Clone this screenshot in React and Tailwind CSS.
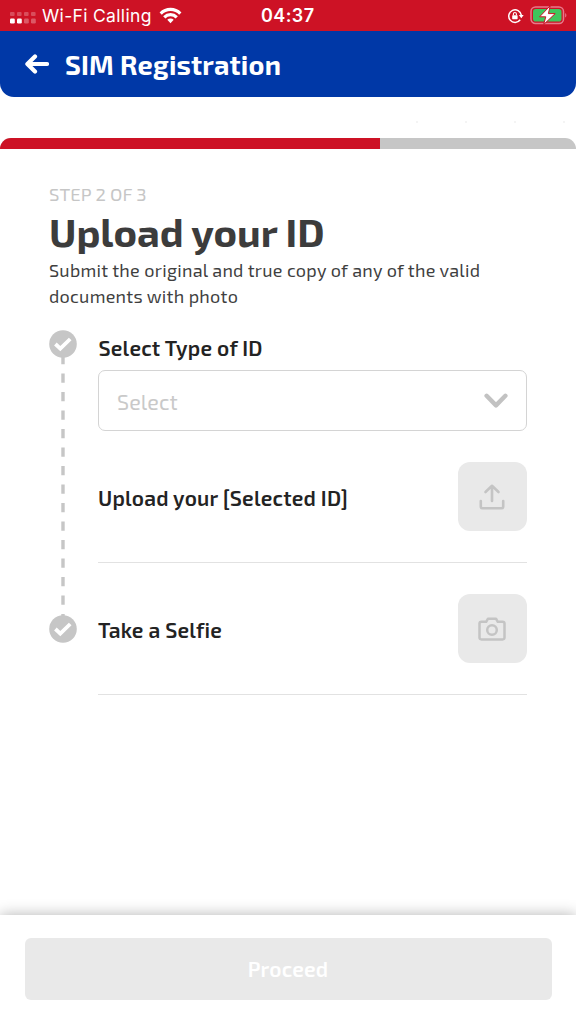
import React from "react";

const SANS = "font-['Exo_2','Noto_Sans',sans-serif]";

function StatusBar() {
  return (
    <div className="flex h-[30.5px] items-center bg-[#cd1225] pl-[9.5px] pr-[8px] pt-[1px] font-['Inter',sans-serif] text-white">
      <div className="flex w-[251.5px] items-center">
        <svg width="26" height="12" viewBox="0 0 26 12" className="mt-[5px]" fill="#fff">
          {[0, 7, 14, 21].map((x, i) => (
            <g key={x}>
              <rect x={x} y="0" width="4.6" height="4" rx="1" opacity="0.25" />
              <rect x={x} y="6.5" width="4.8" height="5" rx="1.2" opacity={i < 2 ? 1 : 0.3} />
            </g>
          ))}
        </svg>
        <span className="ml-[6.5px] whitespace-nowrap text-[17.5px] leading-[28px] tracking-[0.33px]">Wi-Fi Calling</span>
        <svg width="23" height="17" viewBox="0 0 24 18" className="ml-[7.5px] mt-[-1px]" fill="none" stroke="#fff" strokeWidth="3.4">
          <path d="M1.6 6.9a14.7 14.7 0 0 1 20.8 0" />
          <path d="M5.4 10.9a9.3 9.3 0 0 1 13.2 0" />
          <path d="M12 17.2l-3.4-3.6a4.9 4.9 0 0 1 6.8 0z" fill="#fff" stroke="none" />
        </svg>
      </div>
      <span className="whitespace-nowrap text-[18px] font-semibold leading-[28px] tracking-[0.4px]">04:37</span>
      <svg width="18" height="16" viewBox="0 0 18 16" className="ml-auto" fill="none" stroke="#fff" strokeWidth="1.5">
        <path d="M13.2 11.8A6.3 6.3 0 1 1 14.3 7.2" />
        <path d="M11.9 7h4.8l-2.4 3.2z" fill="#fff" stroke="none" />
        <rect x="5.2" y="7.2" width="5.4" height="4" rx=".6" fill="#fff" stroke="none" />
        <path d="M6.4 7.3V6a1.5 1.5 0 0 1 3 0v1.3" strokeWidth="1.1" />
      </svg>
      <svg width="38" height="20" viewBox="0 0 38 20" className="ml-[5px] mt-[-2px]">
        <rect x="1" y="2" width="32.5" height="16.5" rx="4.5" fill="none" stroke="#e8798a" strokeWidth="1.5" />
        <rect x="3" y="4" width="28.5" height="12.5" rx="2.8" fill="#3fc65c" />
        <path d="M35.2 8v4.6c1.6-.7 1.6-3.9 0-4.6z" fill="#e8798a" />
        <path d="M20.2 .8L9.6 11.8h6.2L13.6 19.6 25.2 8.6h-6.8z" fill="#fff" stroke="#cd1225" strokeWidth="1" strokeLinejoin="round" />
      </svg>
    </div>
  );
}

function CheckBadge() {
  return (
    <svg width="28" height="28" viewBox="0 0 28 28" className="block shrink-0">
      <circle cx="14" cy="14" r="13.8" fill="#c6c6c6" />
      <path d="M6.4 14l4.9 4.6 9.9-9.6" fill="none" stroke="#fff" strokeWidth="3.8" />
    </svg>
  );
}

function Timeline() {
  return (
    <div className="flex w-[28px] shrink-0 flex-col items-center">
      <CheckBadge />
      <svg width="4" height="257" viewBox="0 0 4 257" className="block overflow-visible">
        <path d="M2 -3V258" stroke="#c6c6c6" strokeWidth="3.4" strokeDasharray="9.3 9.2" />
      </svg>
      <CheckBadge />
    </div>
  );
}

function ActionRow({ label, children }) {
  return (
    <div className="flex h-[101px] items-start justify-between border-b-[1.5px] border-[#e2e2e2]">
      <span className="mt-[21px] whitespace-nowrap text-[21px] font-semibold leading-[30px] tracking-[0.2px] text-[#232323]">{label}</span>
      <button className="flex size-[69px] items-center justify-center rounded-[12px] bg-[#e9e9e9]">{children}</button>
    </div>
  );
}

export default function App() {
  return (
    <div className={`flex h-[1024px] w-[576px] flex-col overflow-hidden bg-white ${SANS}`}>
      <StatusBar />
      <header className="flex h-[66px] items-center rounded-b-[14px] bg-[#0038a7] pl-[25px] text-white">
        <svg width="24" height="20" viewBox="0 0 24 20" fill="none" stroke="#fff" strokeWidth="4.2" strokeLinecap="round" strokeLinejoin="round">
          <path d="M22 10H3.5M10 2.4L2.4 10l7.6 7.6" />
        </svg>
        <h1 className="ml-[16px] whitespace-nowrap text-[27px] font-bold leading-[36px] tracking-[0.2px]">SIM Registration</h1>
      </header>

      <div className="mt-[24px] flex h-[2px] justify-end gap-[47px] pr-[11px]">
        <i className="size-[2px] rounded-full bg-[#f0f0f0]" />
        <i className="size-[2px] rounded-full bg-[#f0f0f0]" />
        <i className="size-[2px] rounded-full bg-[#f0f0f0]" />
        <i className="size-[2px] rounded-full bg-[#f0f0f0]" />
      </div>
      <div className="mt-[15.5px] h-[11px] overflow-hidden rounded-t-[11px] bg-[#c6c6c6]">
        <div className="h-full w-[380px] bg-[#cd1225]" />
      </div>

      <main className="flex grow flex-col px-[49px] pt-[33px]">
        <p className="h-[23px] whitespace-nowrap text-[18.5px] leading-[24px] tracking-[0.05px] text-[#c6c6c6]">STEP 2 OF 3</p>
        <h2 className="h-[52px] whitespace-nowrap text-[40px] font-bold leading-[52px] tracking-[-0.05px] text-[#3c3c3c]">Upload your ID</h2>
        <p className="h-[52px] whitespace-nowrap text-[18px] leading-[26px] tracking-[0.26px] text-[#3f3f3f]">
          Submit the original and true copy of any of the valid
          <br />
          documents with photo
        </p>

        <section className="mt-[21px] flex">
          <Timeline />
          <div className="ml-[21px] flex w-[429px] flex-col">
            <label className="mt-[3px] h-[30px] whitespace-nowrap pl-[0.5px] text-[21px] font-semibold leading-[30px] tracking-[0.2px] text-[#232323]">Select Type of ID</label>
            <div className="mt-[7px] flex h-[61px] items-center justify-between rounded-[7px] border-[1.5px] border-[#d4d4d4] pl-[18px] pr-[18px]">
              <span className="mt-[2px] text-[21.5px] leading-[28px] tracking-[0.1px] text-[#c9c9c9]">Select</span>
              <svg width="24" height="16" viewBox="0 0 24 16" fill="none" stroke="#c2c2c2" strokeWidth="4.4" strokeLinecap="round" strokeLinejoin="round">
                <path d="M2.6 2.8L12 12.4l9.4-9.6" />
              </svg>
            </div>
            <div className="mt-[31px] flex flex-col gap-[31px]">
              <ActionRow label="Upload your [Selected ID]">
                <svg width="26" height="26" viewBox="0 0 26 26" className="mr-px" fill="none" stroke="#c4c4c4" strokeWidth="2.6" strokeLinecap="round" strokeLinejoin="round">
                  <path d="M13 17V2.5M6.5 8L13 1.8 19.5 8M1.8 17v5.6c0 1 .7 1.6 1.6 1.6h19.2c1 0 1.6-.7 1.6-1.6V17" />
                </svg>
              </ActionRow>
              <ActionRow label="Take a Selfie">
                <svg width="28" height="24" viewBox="0 0 28 24" className="mr-px" fill="none" stroke="#c4c4c4" strokeWidth="2.5" strokeLinejoin="round">
                  <path d="M3.4 4.8h4.8L10 1.7h8l1.8 3.1h4.8c1.1 0 1.9.8 1.9 1.8v14c0 1-.8 1.8-1.9 1.8H3.4c-1.1 0-1.9-.8-1.9-1.8v-14c0-1 .8-1.8 1.9-1.8z" />
                  <circle cx="14" cy="13" r="4.8" />
                </svg>
              </ActionRow>
            </div>
          </div>
        </section>
      </main>

      <footer className="h-[109.5px] shrink-0 bg-white px-[24.5px] pt-[23px] shadow-[0_0_14px_rgba(0,0,0,0.3)]">
        <button className="flex h-[62px] w-full items-center justify-center rounded-[6px] bg-[#e9e9e9] pt-px text-[21px] font-semibold leading-[28px] tracking-[0.2px] text-white">Proceed</button>
      </footer>
    </div>
  );
}
